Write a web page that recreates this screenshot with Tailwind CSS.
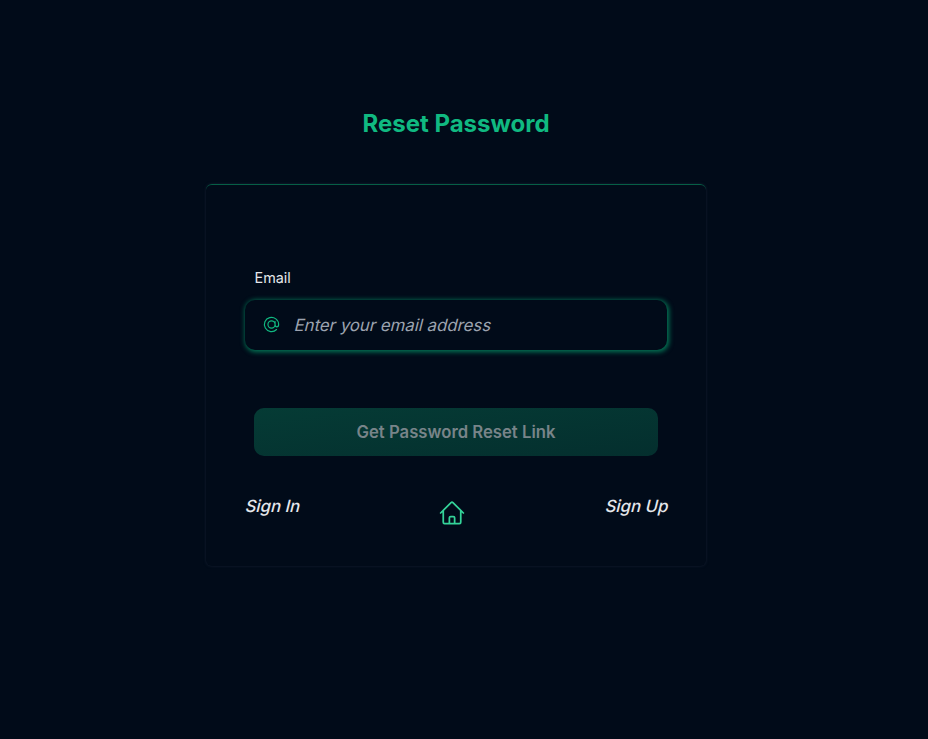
<!DOCTYPE html>
<html lang="en">
<head>
<meta charset="utf-8">
<title>Reset Password</title>
<script src="https://cdn.jsdelivr.net/npm/@tailwindcss/browser@4"></script>
</head>
<body class="bg-[#010b19] font-['Inter',sans-serif] text-[#e5e7eb] h-[739px] overflow-hidden">
<main class="w-[912px] flex flex-col items-center pt-[108px]">
  <h1 class="text-2xl leading-8 font-bold text-[#10b981]">Reset Password</h1>
  <section class="mt-11 w-[500px] h-[382px] rounded-md border-t border-[#065f46] shadow-[0_0_3px_#172033] px-[39px] pt-[83px]">
    <form>
      <label for="email" class="block ml-[9.5px] text-[14.4px] leading-5">Email</label>
      <div class="mt-[12px] h-[50px] w-[422px] flex items-center rounded-[10px] bg-[#010b19] shadow-[1px_1px_5px_1px_#047857] pl-[17px]">
        <svg class="size-[19px] -mt-px text-[#10b981]" viewBox="0 0 24 24" fill="none" stroke="currentColor" stroke-width="1.5" stroke-linecap="round"><path d="M16.5 12a4.5 4.5 0 1 1-9 0 4.5 4.5 0 0 1 9 0Zm0 0c0 1.657 1.007 3 2.25 3S21 13.657 21 12a9 9 0 1 0-2.636 6.364M16.5 12V8.25"/></svg>
        <input id="email" type="email" placeholder="Enter your email address" class="ml-[14px] w-[350px] bg-transparent outline-none -skew-x-14 text-[16.8px] leading-6 placeholder:text-[#9ca3af]">
      </div>
      <button type="button" class="mt-[58px] ml-[9px] block w-[404px] h-12 pt-0.5 rounded-[10px] bg-linear-to-br from-[#053b35] to-[#042f2e] text-[16.7px] font-semibold text-[#788489]">Get Password Reset Link</button>
    </form>
    <nav class="mt-[38px] flex justify-between items-start w-[424px] text-[16.8px] leading-6 font-medium">
      <a class="ml-px -skew-x-14">Sign In</a>
      <a class="mt-[5px] mr-[2px]" aria-label="Home"><svg class="size-[28px] text-[#34d399]" viewBox="0 0 24 24" fill="none" stroke="currentColor" stroke-width="1.5" stroke-linecap="round" stroke-linejoin="round"><path d="m2.25 12 8.954-8.955a1.126 1.126 0 0 1 1.591 0L21.75 12M4.5 9.75v10.125c0 .621.504 1.125 1.125 1.125H9.75v-4.875c0-.621.504-1.125 1.125-1.125h2.25c.621 0 1.125.504 1.125 1.125V21h4.125c.621 0 1.125-.504 1.125-1.125V9.75M8.25 21h8.25"/></svg></a>
      <a class="-skew-x-14">Sign Up</a>
    </nav>
  </section>
</main>
</body>
</html>
